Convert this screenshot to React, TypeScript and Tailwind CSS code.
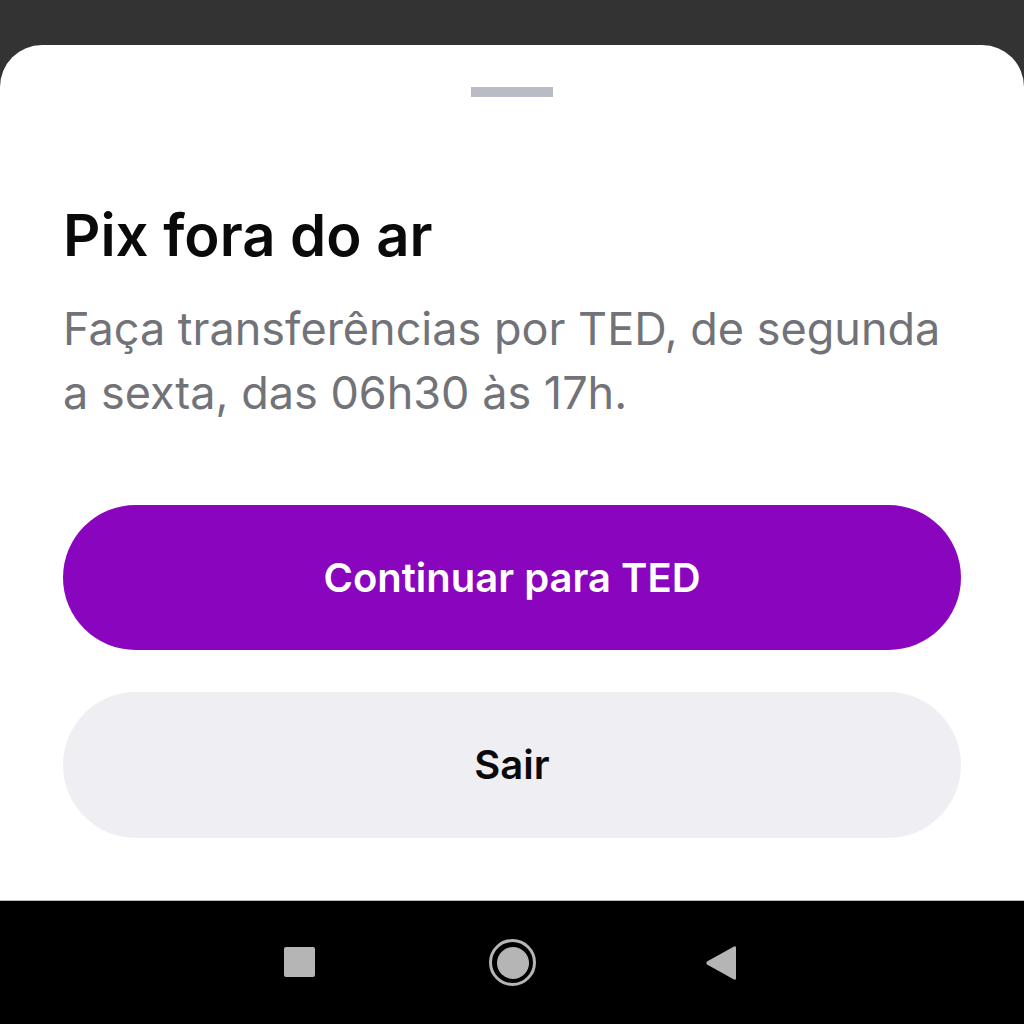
import React from "react";

export default function App() {
  return (
    <div className="w-[1024px] h-[1024px] bg-[#333333] flex flex-col overflow-hidden" style={{ fontFamily: "Inter, 'Noto Sans', sans-serif" }}>
      <div className="h-[45px] shrink-0" />
      <div className="h-[855px] shrink-0 bg-white rounded-t-[42px] flex flex-col px-[63px]">
        <div className="self-center mt-[42px] w-[82px] h-[10px] bg-[#b9bbc5]" />
        <h1 className="mt-[106px] text-[58px] leading-[64px] font-semibold text-[#0a0a0a]">Pix fora do ar</h1>
        <p className="mt-[30px] text-[45px] leading-[64px] text-[#727379]">
          Faça transferências por TED, de segunda a sexta, das 06h30 às 17h.
        </p>
        <button className="mt-[80px] h-[145px] w-full rounded-full bg-[#8a05be] text-white text-[40px] font-semibold flex items-center justify-center">
          Continuar para TED
        </button>
        <button className="mt-[42px] h-[146px] w-full rounded-full bg-[#efeff3] text-[#0a0a0a] text-[40px] font-semibold flex items-center justify-center">
          Sair
        </button>
      </div>
      <div className="h-[124px] shrink-0 bg-black border-t border-[#bdbdbd] flex items-center">
        <div className="relative w-full h-full">
          <div className="absolute left-[284px] top-[46px] w-[31px] h-[30px] rounded-[2px] bg-[#b5b5b5]" />
          <div className="absolute left-[489px] top-[38px] w-[47px] h-[47px] rounded-full border-[3px] border-[#b5b5b5] flex items-center justify-center">
            <div className="w-[32px] h-[32px] rounded-full bg-[#b5b5b5]" />
          </div>
          <svg className="absolute left-[704px] top-[43px]" width="34" height="38" viewBox="0 0 34 38">
            <path d="M30 2.5 Q32 1.5 32 4 L32 34 Q32 36.5 30 35.5 L3 20.5 Q1.5 19 3 17.5 Z" fill="#b5b5b5" />
          </svg>
        </div>
      </div>
    </div>
  );
}
